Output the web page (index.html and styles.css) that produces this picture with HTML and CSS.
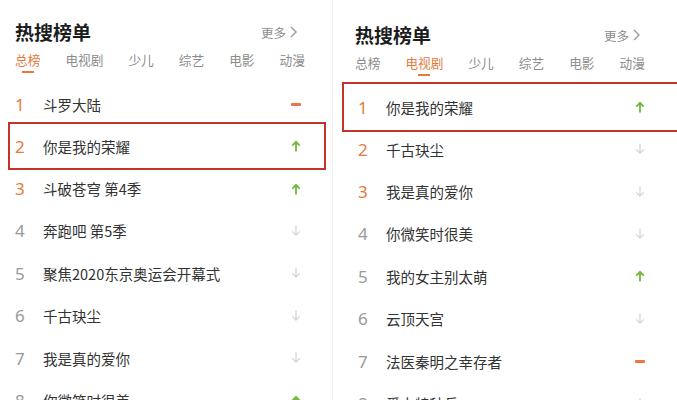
FILE: index.html
```html
<!DOCTYPE html>
<html lang="zh-CN">
<head>
    <meta charset="UTF-8">
    <meta name="viewport" content="width=device-width, initial-scale=1.0">
    <title>热搜榜单</title>
    <link rel="stylesheet" href="styles.css">
</head>
<body>
    <div class="page">
        <!-- 总榜 -->
        <section class="board board-left">
            <div class="board-head">
                <h2 class="board-title">热搜榜单</h2>
                <a class="more" href="#">更多
                    <svg width="7" height="12" viewBox="0 0 7 12"><path d="M1 1l5 5-5 5" fill="none" stroke="#9a9a9a" stroke-width="1.4"/></svg>
                </a>
            </div>
            <nav class="tabs">
                <span class="tab active">总榜</span>
                <span class="tab">电视剧</span>
                <span class="tab">少儿</span>
                <span class="tab">综艺</span>
                <span class="tab">电影</span>
                <span class="tab">动漫</span>
            </nav>
            <ul class="list">
                <li class="row"><span class="rank top">1</span><span class="name">斗罗大陆</span><span class="trend"><i class="dash"></i></span></li>
                <li class="row hot"><span class="rank top">2</span><span class="name">你是我的荣耀</span><span class="trend"><svg class="up" width="10" height="12" viewBox="0 0 10 12"><path d="M5 11.5V2M1.3 5.6L5 1.8l3.7 3.8"/></svg></span></li>
                <li class="row"><span class="rank top">3</span><span class="name">斗破苍穹 第4季</span><span class="trend"><svg class="up" width="10" height="12" viewBox="0 0 10 12"><path d="M5 11.5V2M1.3 5.6L5 1.8l3.7 3.8"/></svg></span></li>
                <li class="row"><span class="rank">4</span><span class="name">奔跑吧 第5季</span><span class="trend"><svg class="down" width="10" height="12" viewBox="0 0 10 12"><path d="M5 0.5V10M1.3 6.4L5 10.2l3.7-3.8"/></svg></span></li>
                <li class="row"><span class="rank">5</span><span class="name">聚焦2020东京奥运会开幕式</span><span class="trend"><svg class="down" width="10" height="12" viewBox="0 0 10 12"><path d="M5 0.5V10M1.3 6.4L5 10.2l3.7-3.8"/></svg></span></li>
                <li class="row"><span class="rank">6</span><span class="name">千古玦尘</span><span class="trend"><svg class="down" width="10" height="12" viewBox="0 0 10 12"><path d="M5 0.5V10M1.3 6.4L5 10.2l3.7-3.8"/></svg></span></li>
                <li class="row"><span class="rank">7</span><span class="name">我是真的爱你</span><span class="trend"><svg class="down" width="10" height="12" viewBox="0 0 10 12"><path d="M5 0.5V10M1.3 6.4L5 10.2l3.7-3.8"/></svg></span></li>
                <li class="row"><span class="rank">8</span><span class="name">你微笑时很美</span><span class="trend"><svg class="up" width="10" height="12" viewBox="0 0 10 12"><path d="M5 11.5V2M1.3 5.6L5 1.8l3.7 3.8"/></svg></span></li>
            </ul>
        </section>

        <!-- 电视剧 -->
        <section class="board board-right">
            <div class="board-head">
                <h2 class="board-title">热搜榜单</h2>
                <a class="more" href="#">更多
                    <svg width="7" height="12" viewBox="0 0 7 12"><path d="M1 1l5 5-5 5" fill="none" stroke="#9a9a9a" stroke-width="1.4"/></svg>
                </a>
            </div>
            <nav class="tabs">
                <span class="tab">总榜</span>
                <span class="tab active">电视剧</span>
                <span class="tab">少儿</span>
                <span class="tab">综艺</span>
                <span class="tab">电影</span>
                <span class="tab">动漫</span>
            </nav>
            <ul class="list">
                <li class="row hot"><span class="rank top">1</span><span class="name">你是我的荣耀</span><span class="trend"><svg class="up" width="10" height="12" viewBox="0 0 10 12"><path d="M5 11.5V2M1.3 5.6L5 1.8l3.7 3.8"/></svg></span></li>
                <li class="row"><span class="rank top">2</span><span class="name">千古玦尘</span><span class="trend"><svg class="down" width="10" height="12" viewBox="0 0 10 12"><path d="M5 0.5V10M1.3 6.4L5 10.2l3.7-3.8"/></svg></span></li>
                <li class="row"><span class="rank top">3</span><span class="name">我是真的爱你</span><span class="trend"><svg class="down" width="10" height="12" viewBox="0 0 10 12"><path d="M5 0.5V10M1.3 6.4L5 10.2l3.7-3.8"/></svg></span></li>
                <li class="row"><span class="rank">4</span><span class="name">你微笑时很美</span><span class="trend"><svg class="down" width="10" height="12" viewBox="0 0 10 12"><path d="M5 0.5V10M1.3 6.4L5 10.2l3.7-3.8"/></svg></span></li>
                <li class="row"><span class="rank">5</span><span class="name">我的女主别太萌</span><span class="trend"><svg class="up" width="10" height="12" viewBox="0 0 10 12"><path d="M5 11.5V2M1.3 5.6L5 1.8l3.7 3.8"/></svg></span></li>
                <li class="row"><span class="rank">6</span><span class="name">云顶天宫</span><span class="trend"><svg class="down" width="10" height="12" viewBox="0 0 10 12"><path d="M5 0.5V10M1.3 6.4L5 10.2l3.7-3.8"/></svg></span></li>
                <li class="row"><span class="rank">7</span><span class="name">法医秦明之幸存者</span><span class="trend"><i class="dash"></i></span></li>
                <li class="row"><span class="rank">8</span><span class="name">爱上特种兵</span><span class="trend"><svg class="down" width="10" height="12" viewBox="0 0 10 12"><path d="M5 0.5V10M1.3 6.4L5 10.2l3.7-3.8"/></svg></span></li>
            </ul>
        </section>
    </div>
</body>
</html>
```

FILE: styles.css
```css
* {
    margin: 0;
    padding: 0;
    box-sizing: border-box;
}
:root {
    --title: #1c1c1c;
    --text: #333;
    --muted: #8c8c8c;
    --orange: #e47a3c;
    --red-box: #c3332c;
    --green: #74b63f;
    --light: #d2d2d2;
    --row-h: 42.4px;
}
body {
    background: #fff;
    font-family: "Noto Sans CJK SC", "Noto Sans", sans-serif;
    overflow: hidden;
    height: 400px;
}
.page {
    display: flex;
    gap: 4px;
    height: 400px;
}
.board {
    height: 400px;
    overflow: hidden;
}
.board-left {
    width: 333px;
    padding: 20px 15px 0 15px;
    border-right: 1px solid #f0f0f0;
}
.board-right {
    width: 340px;
    padding: 23px 15px 0 21px;
}
.board-head {
    display: flex;
    align-items: center;
    justify-content: space-between;
    height: 24px;
}
.board-title {
    font-size: 19px;
    font-weight: 700;
    color: var(--title);
    line-height: 24px;
}
.board-right .board-title {
    margin-left: -3px;
}
.more {
    display: flex;
    align-items: center;
    gap: 4px;
    font-size: 12.5px;
    color: var(--muted);
    text-decoration: none;
    margin-right: 20px;
}
.board-right .more {
    margin-right: 22px;
}
.tabs {
    display: flex;
    gap: 25px;
    margin-top: 6px;
}
.board-right .tabs {
    margin-left: -3px;
}
.tab {
    display: flex;
    flex-direction: column;
    align-items: center;
    font-size: 12.7px;
    line-height: 20px;
    color: var(--muted);
}
.tab::after {
    content: "";
    width: 12px;
    height: 2px;
    margin-top: 1px;
    background: transparent;
}
.tab.active {
    color: var(--orange);
}
.tab.active::after {
    background: var(--orange);
}
.list {
    list-style: none;
    margin-top: 10px;
}
.row {
    display: flex;
    align-items: center;
    height: var(--row-h);
}
.row.hot {
    border: 2px solid var(--red-box);
    height: 48px;
    margin: -3px -9px -3px -7px;
    padding-left: 5px;
    padding-right: 7px;
}
.board-right .row.hot {
    height: 50px;
    margin: -4px -19px -4px -16px;
    padding-left: 14px;
    padding-right: 17px;
}
.rank {
    width: 28px;
    font-family: "Noto Sans", sans-serif;
    font-size: 17px;
    color: #9a9a9a;
}
.rank.top {
    color: var(--orange);
}
.name {
    flex: 1;
    font-size: 14.5px;
    color: var(--text);
}
.trend {
    width: 12px;
    margin-right: 15px;
    display: flex;
    justify-content: center;
}
.board-right .trend {
    margin-right: 16px;
}
.up path {
    fill: none;
    stroke: var(--green);
    stroke-width: 1.8;
}
.down path {
    fill: none;
    stroke: var(--light);
    stroke-width: 1.2;
}
.dash {
    display: block;
    width: 10px;
    height: 3px;
    border-radius: 1px;
    background: #ee7444;
}
```
